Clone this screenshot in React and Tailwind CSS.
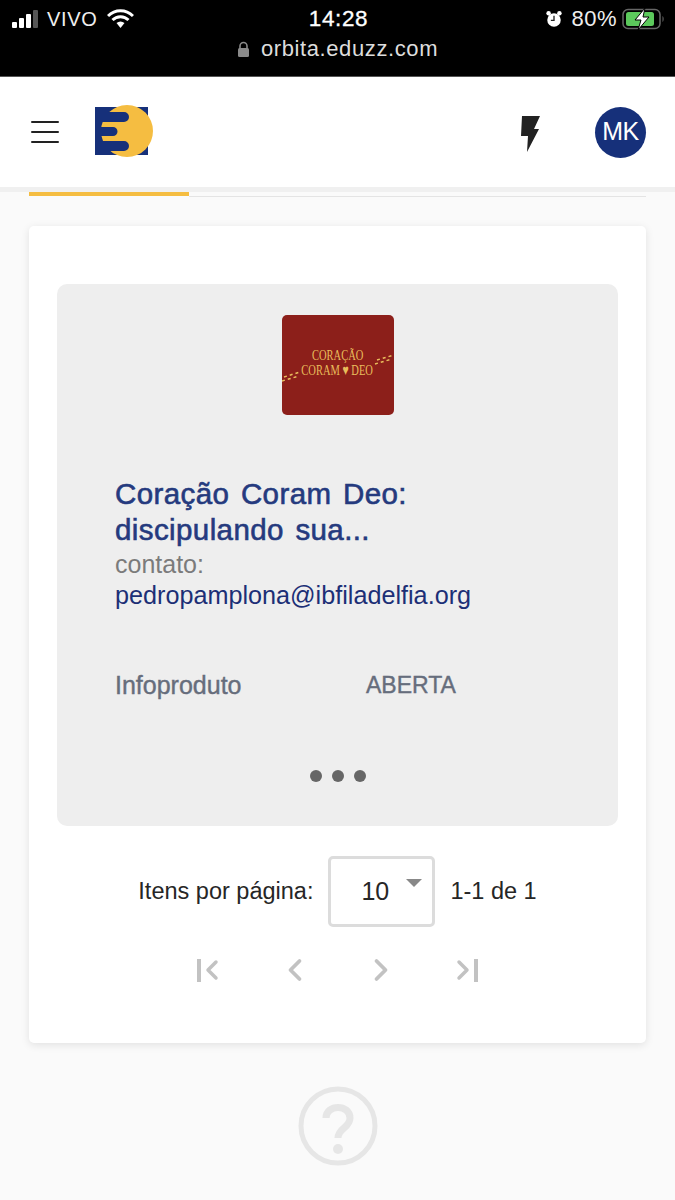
import { ChevronLeft, ChevronRight } from 'lucide-react';

const StatusBar = () => (
  <div className="h-[76px] bg-black text-[#eeeeee] shrink-0">
    <div className="flex items-center justify-between pl-3 pr-[10px] pt-[7px]">
      <div className="flex items-center gap-[9px] w-[200px]">
        <div className="flex items-end gap-[2px]">
          <span className="w-[5px] h-[6px] rounded-[1px] bg-white" />
          <span className="w-[5px] h-[10px] rounded-[1px] bg-white" />
          <span className="w-[5px] h-[14px] rounded-[1px] bg-white" />
          <span className="w-[5px] h-[18px] rounded-[1px] bg-[#555555]" />
        </div>
        <span className="text-[20px] leading-6 tracking-[0.7px]">VIVO</span>
        <svg width="27" height="20" viewBox="0 0 27 20">
          <path d="M1 7 C8 0 19 0 26 7" fill="none" stroke="#ffffff" strokeWidth="3" />
          <path d="M5.5 11 C10 6.5 17 6.5 21.5 11" fill="none" stroke="#ffffff" strokeWidth="3" />
          <path d="M9.5 14 C12 12 15 12 17.5 14 L13.5 19 Z" fill="#ffffff" />
        </svg>
      </div>
      <span className="text-[22.5px] leading-6 font-medium tracking-[0.6px] text-white [-webkit-text-stroke:0.3px_#ffffff]">14:28</span>
      <div className="flex items-center justify-end gap-[8px] w-[200px]">
        <svg width="18" height="20" viewBox="0 0 20 20">
          <circle cx="10" cy="11" r="7.5" fill="#ffffff" />
          <path d="M10 6.5 V11.5 H6.5" fill="none" stroke="#222222" strokeWidth="1.5" />
          <circle cx="4" cy="3.5" r="2.5" fill="#ffffff" />
          <circle cx="16" cy="3.5" r="2.5" fill="#ffffff" />
        </svg>
        <span className="text-[22px] leading-6 tracking-[0.5px]">80%</span>
        <svg width="43" height="22" viewBox="0 0 43 22" className="-ml-[3px]">
          <rect x="1" y="1.5" width="37" height="19" rx="5" fill="none" stroke="#666666" strokeWidth="1.5" />
          <rect x="4" y="4" width="28" height="14" rx="2.5" fill="#5cc95c" />
          <path d="M40.5 8 C42 9 42 13 40.5 14 Z" fill="#666666" />
          <path d="M23 0 L13 12 H19 L16 22 L27 9 H21 Z" fill="#ffffff" stroke="#000000" strokeWidth="1" />
        </svg>
      </div>
    </div>
    <div className="flex items-center justify-center gap-[11px] mt-[6px]">
      <svg width="13" height="17" viewBox="0 0 13 17">
        <path d="M3 8 V5 a3.5 3.5 0 0 1 7 0 V8" fill="none" stroke="#8a8a8a" strokeWidth="1.6" />
        <rect x="1" y="7" width="11" height="9" rx="1.5" fill="#8a8a8a" />
      </svg>
      <span className="text-[22px] leading-6 tracking-[0.6px] text-[#dddddd]">orbita.eduzz.com</span>
    </div>
  </div>
);

const Logo = () => (
  <svg width="58" height="54" viewBox="0 0 58 54">
    <rect x="0" y="3" width="53" height="48" fill="#16307a" />
    <circle cx="32" cy="27" r="26" fill="#f5bd41" />
    <path d="M0 8 H29 a5 5 0 0 1 0 10 H0 Z M0 23 H18 a4.5 4.5 0 0 1 0 9 H0 Z M0 37 H29 a5 5 0 0 1 0 10 H0 Z" fill="#16307a" />
  </svg>
);

const Header = () => (
  <div className="h-[110px] bg-white flex items-center pl-[31px] pr-[29px] shrink-0">
    <div className="flex flex-col gap-[7.5px] w-[28px]">
      <span className="h-[2.5px] bg-[#222222] rounded-full" />
      <span className="h-[2.5px] bg-[#222222] rounded-full" />
      <span className="h-[2.5px] bg-[#222222] rounded-full" />
    </div>
    <div className="ml-[36px] -mt-[2px]">
      <Logo />
    </div>
    <svg width="19" height="36" viewBox="0 0 19 36" className="ml-auto mt-[4px]">
      <path d="M1 0 H19 L13 13 H18 L6 36 L7 20 H0 Z" fill="#222222" />
    </svg>
    <div className="ml-[55px] w-[51px] h-[51px] rounded-full bg-[#16307a] text-white flex items-center justify-center text-[25px] tracking-[-0.5px]">
      MK
    </div>
  </div>
);

const Cover = () => (
  <div className="relative self-center w-[112px] h-[100px] rounded-[5px] bg-[#8c1f1a] flex flex-col items-center justify-center pb-[5px] text-[#e8bd5c] font-['Liberation_Serif',serif] leading-[15px] text-[15px] uppercase whitespace-nowrap">
    <span className="scale-x-70">Coração</span>
    <span className="scale-x-70">Coram ♥ Deo</span>
    <svg width="112" height="100" viewBox="0 0 112 100" className="absolute left-0 top-0">
      <path d="M0 66 L17 61 M2 62 L18 57 M93 49 L110 44 M95 45 L112 40" fill="none" stroke="#e8bd5c" strokeWidth="1.5" strokeDasharray="3 3" />
    </svg>
  </div>
);

const Product = () => (
  <div className="bg-[#eeeeee] rounded-[10px] h-[542px] pt-[31px] flex flex-col">
    <Cover />
    <div className="pl-[58px] pt-[61px]">
      <h2 className="text-[29.5px] tracking-[0.4px] [word-spacing:3px] leading-[36px] text-[#253a7e] [-webkit-text-stroke:0.6px_#253a7e]">
        Coração Coram Deo:
        <br />
        discipulando sua...
      </h2>
      <div className="text-[25px] leading-[32px] text-[#7b7b7b]">contato:</div>
      <div className="text-[25.2px] leading-[32px] -mt-[1px] text-[#1c2f76]">pedropamplona@ibfiladelfia.org</div>
      <div className="flex mt-[58px] text-[23px] leading-[32px] text-[#666d7c] [-webkit-text-stroke:0.4px_#666d7c]">
        <span className="w-[251px] text-[25px]">Infoproduto</span>
        <span>ABERTA</span>
      </div>
    </div>
    <div className="flex justify-center gap-[10px] mt-[69px]">
      <span className="w-[12px] h-[12px] rounded-full bg-[#666666]" />
      <span className="w-[12px] h-[12px] rounded-full bg-[#666666]" />
      <span className="w-[12px] h-[12px] rounded-full bg-[#666666]" />
    </div>
  </div>
);

const Pagination = () => (
  <div className="flex flex-col items-center">
    <div className="flex items-center mt-[30px] text-[23.5px] text-[#262626]">
      <span>Itens por página:</span>
      <div className="relative ml-[15px] w-[107px] h-[71px] rounded-[5px] border-[3px] border-[#dcdcdc] bg-white flex items-center pl-[30px] text-[25px]">
        10
        <span className="absolute right-[10px] top-[20px] w-0 h-0 border-x-[8px] border-x-transparent border-t-[8px] border-t-[#888888]" />
      </div>
      <span className="ml-[15px]">1-1 de 1</span>
    </div>
    <div className="flex items-center gap-[50px] mt-[25px] text-[#c2c2c2]">
      <div className="flex items-center w-[36px] pl-[6px]">
        <span className="w-[4px] h-[23px] shrink-0 bg-[#c2c2c2]" />
        <ChevronLeft size={32} strokeWidth={2.6} className="-ml-[5px] shrink-0" />
      </div>
      <ChevronLeft size={36} strokeWidth={2.5} />
      <ChevronRight size={36} strokeWidth={2.5} />
      <div className="flex items-center justify-end w-[36px] pr-[7px]">
        <ChevronRight size={32} strokeWidth={2.6} className="-mr-[5px] shrink-0" />
        <span className="w-[4px] h-[23px] shrink-0 bg-[#c2c2c2]" />
      </div>
    </div>
  </div>
);

const App = () => (
  <div className="w-[675px] h-[1200px] overflow-hidden bg-[#fafafa] flex flex-col font-['Liberation_Sans',Arial,sans-serif]">
    <StatusBar />
    <div className="h-px bg-[#555555] shrink-0" />
    <Header />
    <div className="h-[5px] bg-[#f0f0f0] shrink-0" />
    <div className="mx-[29px] flex h-[5px] shrink-0">
      <div className="w-[160px] h-[4px] bg-[#f5bd41]" />
      <div className="flex-1 self-end h-[1px] bg-[#e4e4e4]" />
    </div>
    <div className="mx-[29px] mt-[29px] h-[817px] bg-white rounded-[5px] shadow-[0_2px_8px_rgba(0,0,0,0.1)] pt-[58px] px-[28px] shrink-0">
      <Product />
      <Pagination />
    </div>
    <div className="flex justify-center mt-[43px]">
      <svg width="80" height="80" viewBox="0 0 80 80">
        <circle cx="40" cy="40" r="37" fill="none" stroke="#e6e6e6" strokeWidth="5" />
        <path d="M28 32 C28 18 52 18 52 32 C52 42 40 42 40 52" fill="none" stroke="#e6e6e6" strokeWidth="7" />
        <circle cx="40" cy="63" r="5" fill="#e6e6e6" />
      </svg>
    </div>
  </div>
);

export default App;
